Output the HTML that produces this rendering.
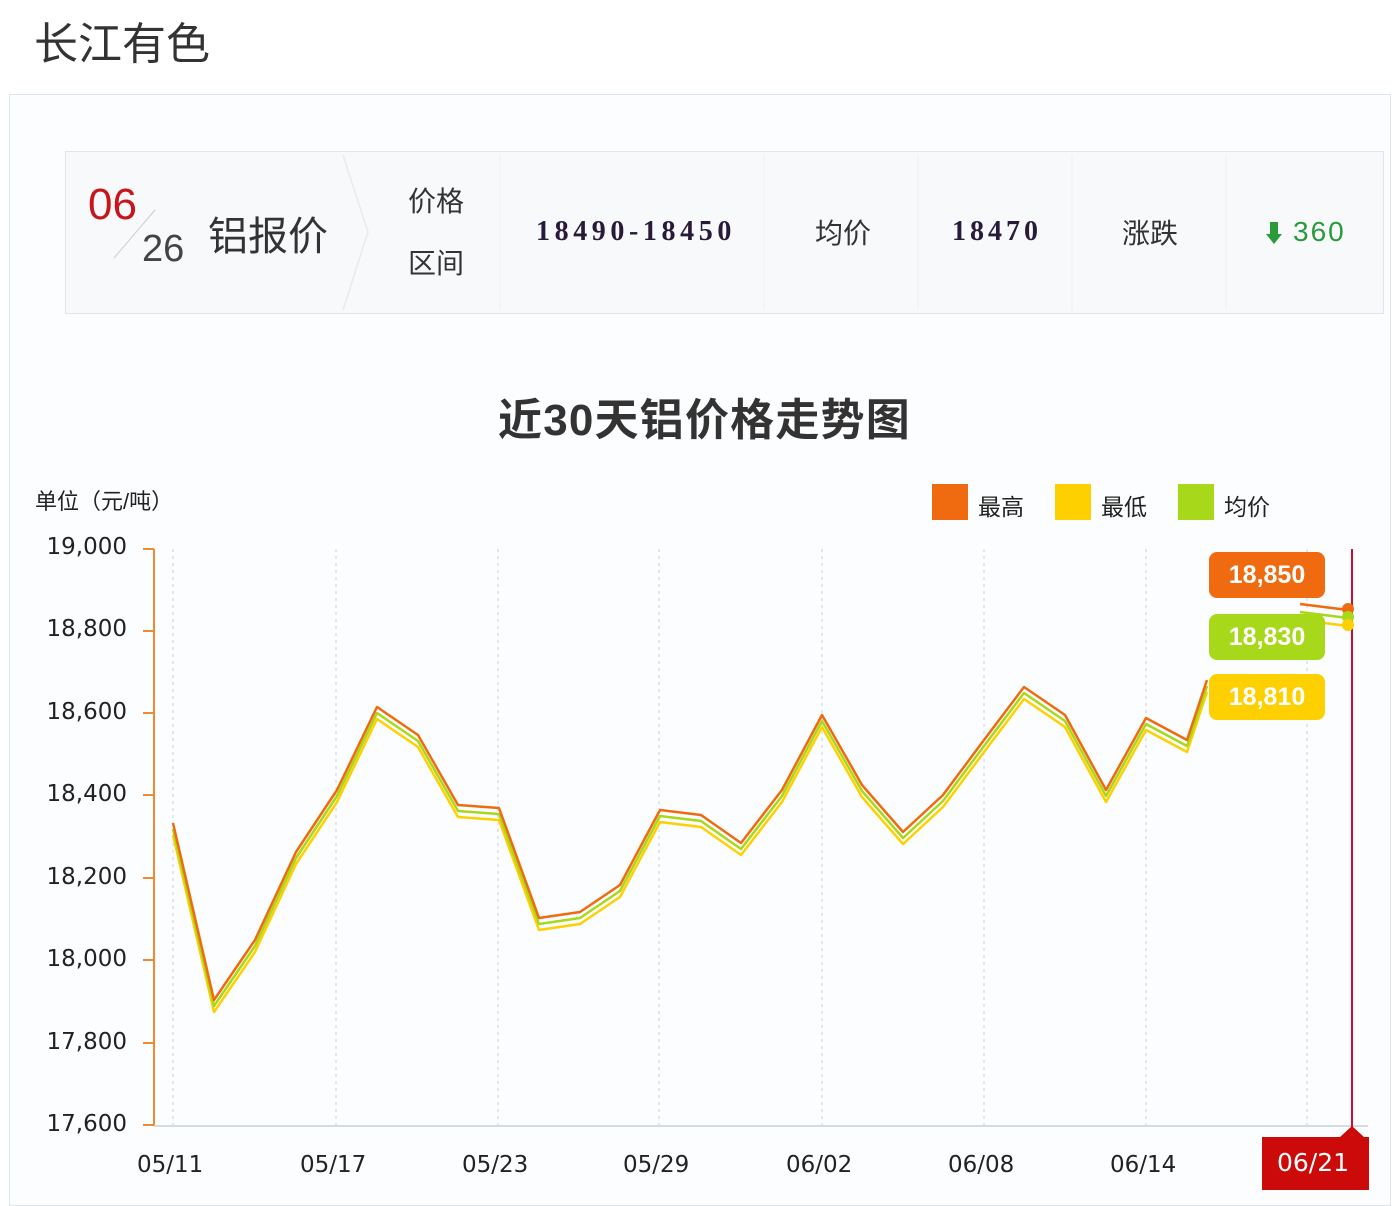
<!DOCTYPE html>
<html><head><meta charset="utf-8"><style>
body{margin:0;width:1392px;height:1198px;background:#fff;font-family:"Liberation Sans","Noto Sans CJK SC",sans-serif;overflow:hidden;position:relative}
.t{position:absolute;white-space:nowrap}
.y{position:absolute;left:20px;width:107px;text-align:right;font-family:"DejaVu Sans",sans-serif;font-size:23px;color:#222;line-height:28px}
.x{position:absolute;top:1152px;font-family:"DejaVu Sans",sans-serif;font-size:23px;color:#222}
</style></head><body>
<div class="t" style="left:34px;top:8px;font-size:44px;color:#333">长江有色</div>
<div style="position:absolute;left:9px;top:94px;width:1380px;height:1110px;border:1px solid #dde6f0;background:#fcfdfe"></div>
<div style="position:absolute;left:65px;top:151px;width:1317px;height:161px;border:1px solid #e2e5ea;background:#f7f9fb"></div>
<svg style="position:absolute;left:0;top:0" width="1392" height="1198">
<line x1="114" y1="258" x2="155" y2="210" stroke="#ccc"/>
<polyline points="343,155 368,232 343,310" fill="none" stroke="#e8eaee" stroke-width="1.5"/>
<g stroke="#eceef1"><line x1="500" y1="155" x2="500" y2="310"/><line x1="764" y1="155" x2="764" y2="310"/><line x1="918" y1="155" x2="918" y2="310"/><line x1="1072" y1="155" x2="1072" y2="310"/><line x1="1226" y1="155" x2="1226" y2="310"/></g>
<g stroke="#c8cfe0" stroke-dasharray="3,4"><line x1="173" y1="549" x2="173" y2="1125"/><line x1="336" y1="549" x2="336" y2="1125"/><line x1="498" y1="549" x2="498" y2="1125"/><line x1="659" y1="549" x2="659" y2="1125"/><line x1="822" y1="549" x2="822" y2="1125"/><line x1="984" y1="549" x2="984" y2="1125"/><line x1="1146" y1="549" x2="1146" y2="1125"/><line x1="1307" y1="549" x2="1307" y2="1125"/></g>
<line x1="154" y1="549" x2="154" y2="1126" stroke="#f08a30" stroke-width="2"/>
<line x1="154" y1="1126" x2="1368" y2="1126" stroke="#c8d0dc" stroke-width="1.5"/>
<g stroke="#f08a30" stroke-width="2"><line x1="143" y1="549" x2="154" y2="549"/><line x1="143" y1="631" x2="154" y2="631"/><line x1="143" y1="713" x2="154" y2="713"/><line x1="143" y1="795" x2="154" y2="795"/><line x1="143" y1="878" x2="154" y2="878"/><line x1="143" y1="960" x2="154" y2="960"/><line x1="143" y1="1043" x2="154" y2="1043"/><line x1="143" y1="1125" x2="154" y2="1125"/></g>
<g fill="none" stroke-width="2.5" stroke-linejoin="round">
<polyline stroke="#ffd000" transform="translate(0,12)" points="173,823 214,1000 255,940 296,852 337,790 377,707 418,735 458,805 499,808 539,918 580,912 620,885 660,810 701,815 741,843 782,790 822,715 862,785 903,832 943,795 984,740 1024,687 1065,715 1106,790 1146,718 1187,740 1207,680"/>
<polyline stroke="#a8d81a" transform="translate(0,6)" points="173,823 214,1000 255,940 296,852 337,790 377,707 418,735 458,805 499,808 539,918 580,912 620,885 660,810 701,815 741,843 782,790 822,715 862,785 903,832 943,795 984,740 1024,687 1065,715 1106,790 1146,718 1187,740 1207,680"/>
<polyline stroke="#f06a10" points="173,823 214,1000 255,940 296,852 337,790 377,707 418,735 458,805 499,808 539,918 580,912 620,885 660,810 701,815 741,843 782,790 822,715 862,785 903,832 943,795 984,740 1024,687 1065,715 1106,790 1146,718 1187,740 1207,680"/>
<polyline stroke="#f06a10" points="1300,604 1348,610"/><polyline stroke="#a8d81a" points="1300,612 1348,618"/><polyline stroke="#ffd000" points="1300,620 1348,626"/>
</g>
<line x1="1352" y1="549" x2="1352" y2="1128" stroke="#c8102e" stroke-width="2"/>
<circle cx="1348" cy="609" r="6" fill="#f06a10"/><circle cx="1348" cy="617" r="6" fill="#a8d81a"/><circle cx="1348" cy="625" r="6" fill="#ffd000"/>
<path d="M1262 1137 H1340 L1352 1126 L1364 1137 H1369 V1190 H1262Z" fill="#cc0a0a"/>
<path d="M1270 222 h8 v12 h4 l-8 10 l-8 -10 h4z" fill="#2a9a3a"/>
</svg>
<div class="t" style="left:88px;top:180px;font-size:44px;color:#c8141a">06</div>
<div class="t" style="left:142px;top:228px;font-size:38px;color:#444">26</div>
<div class="t" style="left:208px;top:204px;font-size:40px;color:#333">铝报价</div>
<div class="t" style="left:408px;top:180px;font-size:28px;color:#333">价格</div>
<div class="t" style="left:408px;top:242px;font-size:28px;color:#333">区间</div>
<div class="t" style="left:536px;top:216px;font-size:28px;color:#2a1a3a;font-family:'Liberation Serif',serif;font-weight:bold;letter-spacing:4.6px">18490-18450</div>
<div class="t" style="left:815px;top:212px;font-size:28px;color:#333">均价</div>
<div class="t" style="left:952px;top:216px;font-size:28px;color:#2a1a3a;font-family:'Liberation Serif',serif;font-weight:bold;letter-spacing:4px">18470</div>
<div class="t" style="left:1122px;top:212px;font-size:28px;color:#333">涨跌</div>
<div class="t" style="left:1293px;top:216px;font-size:28px;color:#2a9a3a;letter-spacing:2px">360</div>
<div class="t" style="left:498px;top:384px;font-size:44px;font-weight:bold;color:#333;letter-spacing:1.2px">近30天铝价格走势图</div>
<div class="t" style="left:35px;top:484px;font-size:22px;color:#222">单位（元/吨）</div>
<div style="position:absolute;left:932px;top:484px;width:36px;height:36px;background:#f06a10"></div>
<div class="t" style="left:978px;top:488px;font-size:23px;color:#222">最高</div>
<div style="position:absolute;left:1055px;top:484px;width:36px;height:36px;background:#ffd000"></div>
<div class="t" style="left:1101px;top:488px;font-size:23px;color:#222">最低</div>
<div style="position:absolute;left:1178px;top:484px;width:36px;height:36px;background:#a8d81a"></div>
<div class="t" style="left:1224px;top:488px;font-size:23px;color:#222">均价</div>
<div class="y" style="top:533px">19,000</div>
<div class="y" style="top:615px">18,800</div>
<div class="y" style="top:698px">18,600</div>
<div class="y" style="top:780px">18,400</div>
<div class="y" style="top:863px">18,200</div>
<div class="y" style="top:945px">18,000</div>
<div class="y" style="top:1028px">17,800</div>
<div class="y" style="top:1110px">17,600</div>
<div class="x" style="left:137px">05/11</div>
<div class="x" style="left:300px">05/17</div>
<div class="x" style="left:462px">05/23</div>
<div class="x" style="left:623px">05/29</div>
<div class="x" style="left:786px">06/02</div>
<div class="x" style="left:948px">06/08</div>
<div class="x" style="left:1110px">06/14</div>
<div class="t" style="left:1277px;top:1148px;font-size:25px;color:#fff;font-family:'DejaVu Sans',sans-serif">06/21</div>
<div class="t" style="left:1209px;top:552px;width:116px;height:46px;border-radius:8px;background:#f06a10;color:#fff;font-size:25px;font-weight:bold;text-align:center;line-height:46px">18,850</div>
<div class="t" style="left:1209px;top:614px;width:116px;height:46px;border-radius:8px;background:#a8d81a;color:#fff;font-size:25px;font-weight:bold;text-align:center;line-height:46px">18,830</div>
<div class="t" style="left:1209px;top:674px;width:116px;height:46px;border-radius:8px;background:#ffd000;color:#fff;font-size:25px;font-weight:bold;text-align:center;line-height:46px">18,810</div>
</body></html>
